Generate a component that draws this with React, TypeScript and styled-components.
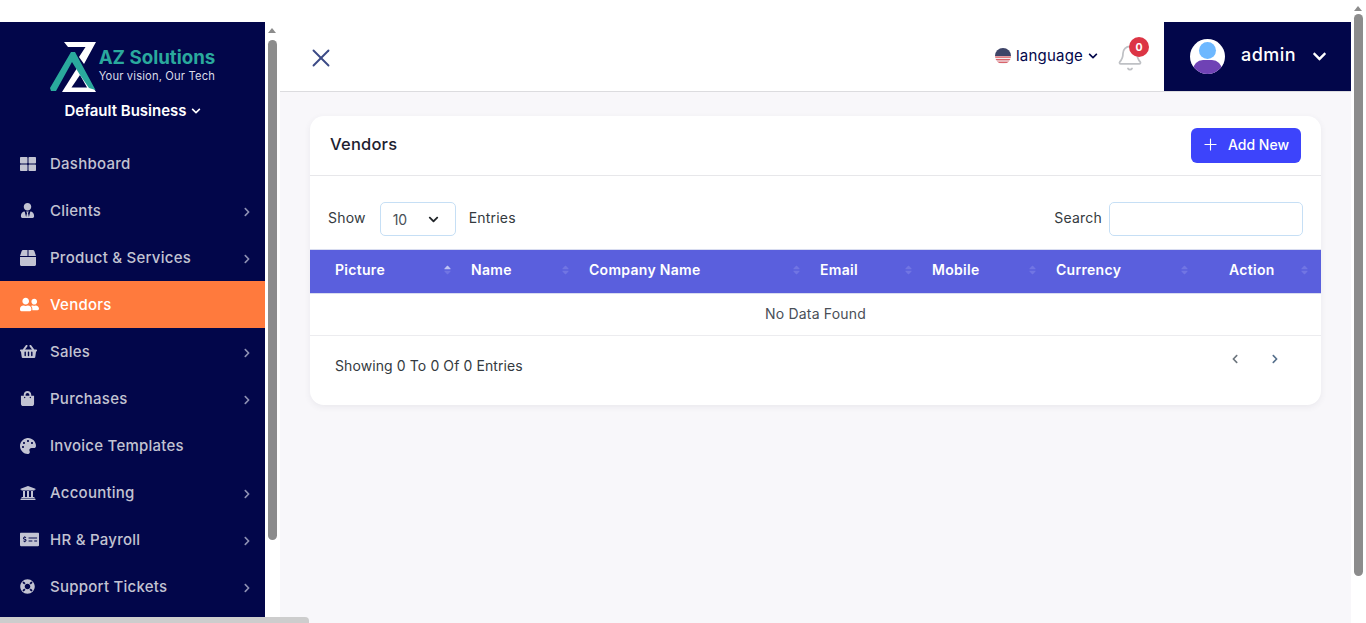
import React from "react";
import styled, { createGlobalStyle } from "styled-components";
import { X, Plus, Bell } from "lucide-react";
import {
  FaThLarge,
  FaUserTie,
  FaBox,
  FaUserFriends,
  FaShoppingBasket,
  FaShoppingBag,
  FaPalette,
  FaUniversity,
  FaMoneyCheckAlt,
  FaLifeRing,
  FaChevronRight,
  FaChevronLeft,
  FaChevronDown,
  FaSortUp,
  FaSortDown,
} from "react-icons/fa";

const NAVY = "#02064a";

const GlobalStyle = createGlobalStyle`
  html, body {
    margin: 0;
    height: 100%;
    overflow: hidden;
    background: #fff;
    font-family: Inter, "Liberation Sans", sans-serif;
  }
  * { box-sizing: border-box; }
`;

const Shell = styled.div`
  display: flex;
  height: 100vh;
  position: relative;
`;

const Page = styled.div`
  flex: 1;
  min-width: 0;
  display: flex;
  padding-top: 22px;
`;

const Sidebar = styled.aside`
  width: 265px;
  flex-shrink: 0;
  background: ${NAVY};
  display: flex;
  flex-direction: column;
`;

const Brand = styled.div`
  height: 118px;
  flex-shrink: 0;
  padding-top: 20px;
  display: flex;
  flex-direction: column;
  align-items: center;
`;

const LogoRow = styled.div`
  display: flex;
  align-items: center;
  height: 50px;
  gap: 3px;
`;

const LogoText = styled.div`
  display: flex;
  flex-direction: column;
  margin-bottom: 3px;
`;

const LogoTitle = styled.span`
  color: #2aa99d;
  font-size: 18.7px;
  line-height: 21px;
  font-weight: 700;
`;

const LogoTag = styled.span`
  color: #d9dbe8;
  font-size: 11.2px;
  line-height: 15px;
  margin-top: 1px;
  letter-spacing: 0.15px;
`;

const BusinessPicker = styled.div`
  display: flex;
  align-items: center;
  gap: 4px;
  margin-top: 8px;
  color: #fff;
  font-size: 15px;
  line-height: 22px;
  font-weight: 600;
`;

const NavList = styled.nav`
  display: flex;
  flex-direction: column;
`;

const NavItem = styled.div<{ $active?: boolean }>`
  height: 47px;
  flex-shrink: 0;
  display: flex;
  align-items: center;
  padding: 0 13px 0 20px;
  background: ${({ $active }) => ($active ? "#ff7a3d" : "transparent")};
  color: ${({ $active }) => ($active ? "#fff" : "#c2c3d2")};
  font-size: 15px;
  font-weight: 500;
  letter-spacing: 0.25px;
`;

const NavIcon = styled.span`
  width: 30px;
  display: flex;
  align-items: center;
  flex-shrink: 0;
`;

const NavArrow = styled.span`
  margin-left: auto;
  display: flex;
  color: #8d90b3;
  padding-top: 3px;
`;

const ScrollRail = styled.div<{ $top: number; $thumbTop: number; $thumbHeight: number }>`
  width: 15px;
  flex-shrink: 0;
  background: #fff;
  padding-top: ${({ $thumbTop }) => $thumbTop}px;
  display: flex;
  justify-content: center;
  position: relative;

  &::before {
    content: "";
    position: absolute;
    top: ${({ $top }) => $top}px;
    left: 3px;
    border-left: 4.5px solid transparent;
    border-right: 4.5px solid transparent;
    border-bottom: 5px solid #8c8c8c;
  }

  &::after {
    content: "";
    display: block;
    width: 9px;
    height: ${({ $thumbHeight }) => $thumbHeight}px;
    border-radius: 5px;
    background: #8c8c8c;
  }
`;

const BottomScroll = styled.div`
  position: absolute;
  left: 0;
  bottom: 0;
  width: 309px;
  height: 6px;
  border-radius: 0 4px 0 0;
  background: #cdcdcd;
`;

const Main = styled.main`
  flex: 1;
  min-width: 0;
  display: flex;
  flex-direction: column;
  background: #f8f7fa;
`;

const TopBar = styled.header`
  height: 70px;
  flex-shrink: 0;
  display: flex;
  align-items: stretch;
  background: #fff;
  border-bottom: 1px solid #dcdcdf;
  padding-left: 26px;
`;

const CloseButton = styled.div`
  display: flex;
  align-items: center;
  color: #3b4a86;
  padding-top: 2px;
  margin-right: auto;
`;

const LanguagePicker = styled.div`
  display: flex;
  align-items: center;
  gap: 5px;
  color: ${NAVY};
  font-size: 15px;
  letter-spacing: 0.2px;
  padding-bottom: 2px;
`;

const BellWrap = styled.div`
  position: relative;
  width: 30px;
  margin: 0 18px 0 18px;
  display: flex;
  align-items: center;
  color: #bfc1c5;
  padding-top: 3px;
`;

const Badge = styled.span`
  position: absolute;
  top: 15px;
  left: 13px;
  width: 20px;
  height: 20px;
  border-radius: 50%;
  background: #dc3545;
  color: #fff;
  font-size: 10.5px;
  font-weight: 700;
  display: flex;
  align-items: center;
  justify-content: center;
`;

const UserBlock = styled.div`
  width: 187px;
  background: ${NAVY};
  display: flex;
  align-items: center;
  padding: 0 0 0 26px;
  color: #fff;
  font-size: 18px;
  font-weight: 500;
  letter-spacing: 0.5px;
`;

const UserName = styled.span`
  margin: -4px 7px 0 16px;
  width: 64px;
`;

const Content = styled.div`
  padding: 24px 30px 0 30px;
`;

const Card = styled.section`
  height: 289px;
  background: #fff;
  border-radius: 14px;
  box-shadow: 0 2px 6px rgba(60, 60, 90, 0.08);
  overflow: hidden;
`;

const CardHead = styled.div`
  height: 60px;
  display: flex;
  align-items: center;
  justify-content: space-between;
  padding: 0 20px;
  border-bottom: 1px solid #e7e7ea;
`;

const CardTitle = styled.h2`
  margin: -3px 0 0;
  font-size: 16.5px;
  line-height: 24px;
  font-weight: 500;
  color: #1d2130;
  letter-spacing: 0.2px;
`;

const AddButton = styled.button`
  width: 110px;
  height: 35px;
  border: 0;
  border-radius: 6px;
  background: #3d44fb;
  color: #fff;
  font: inherit;
  font-size: 14px;
  line-height: 17px;
  font-weight: 500;
  display: flex;
  align-items: center;
  padding: 0 0 2px 10px;
  gap: 8px;
`;

const FilterRow = styled.div`
  height: 73px;
  display: flex;
  align-items: flex-start;
  justify-content: space-between;
  padding: 26px 18px 0;
  font-size: 14px;
  color: #343a40;
`;

const FilterGroup = styled.div`
  display: flex;
  align-items: center;
`;

const FilterLabel = styled.span<{ $gap: number }>`
  margin: 0 ${({ $gap }) => $gap}px 3px;
  letter-spacing: 0.2px;

  &:first-child {
    margin-left: 0;
  }
`;

const PageSize = styled.div`
  width: 76px;
  height: 34px;
  border: 1px solid #c6dff5;
  border-radius: 5px;
  display: flex;
  align-items: center;
  justify-content: space-between;
  padding: 0 16px 0 12px;
  color: #495057;
  font-size: 14px;
`;

const SearchBox = styled.input`
  width: 194px;
  height: 34px;
  border: 1px solid #c6dff5;
  border-radius: 5px;
  background: #fff;
  outline: none;
`;

const Table = styled.table`
  width: 100%;
  table-layout: fixed;
  border-collapse: collapse;
`;

const HeadCell = styled.th<{ $width: number; $lead?: number }>`
  position: relative;
  width: ${({ $width }) => $width}px;
  height: 44px;
  padding: 0 0 4px ${({ $lead }) => $lead ?? 15}px;
  background: #5a5fdd;
  border-top: 1px solid #d8dcf0;
  border-bottom: 1px solid #d8dcf0;
  color: #fff;
  font-size: 14px;
  font-weight: 600;
  text-align: left;
  letter-spacing: 0.3px;
`;

const SortMark = styled.span<{ $asc?: boolean; $right: number }>`
  position: absolute;
  top: 11px;
  right: ${({ $right }) => $right}px;
  width: 7px;
  height: 18px;
  color: #7175e3;

  svg {
    position: absolute;
    left: 0;
    top: 0;
    width: 7px;
    height: 18px;
  }

  svg:first-child {
    color: ${({ $asc }) => ($asc ? "#bfc2f3" : "#7175e3")};
  }
`;

const EmptyCell = styled.td`
  height: 42px;
  padding-bottom: 4px;
  text-align: center;
  font-size: 14px;
  color: #4a4f57;
  border-bottom: 1px solid #ececef;
  letter-spacing: 0.2px;
`;

const TableFoot = styled.div`
  display: flex;
  justify-content: space-between;
  padding: 0 41px 0 25px;
`;

const EntryCount = styled.span`
  margin-top: 20px;
  font-size: 14px;
  line-height: 20px;
  color: #343a40;
  letter-spacing: 0.1px;
`;

const Pager = styled.div`
  display: flex;
  gap: 30px;
  margin-top: 18px;
  height: 12px;
  color: #6c757d;
`;

const PagerNext = styled.span`
  display: flex;
  color: #56708c;
`;

const UserAvatar = () => (
  <svg width="35" height="35" viewBox="0 0 35 35" style={{ flexShrink: 0 }}>
    <defs>
      <clipPath id="avatarClip">
        <circle cx="17.5" cy="17.5" r="17.5" />
      </clipPath>
    </defs>
    <circle cx="17.5" cy="17.5" r="17.5" fill="#fff" />
    <g clipPath="url(#avatarClip)">
      <circle cx="17.5" cy="11.5" r="8.5" fill="#6db8ff" />
      <rect x="3" y="21" width="29" height="20" rx="10" fill="#6f42b5" />
    </g>
  </svg>
);

const UsFlag = () => (
  <svg width="16" height="16" viewBox="0 0 16 16">
    <defs>
      <clipPath id="flagClip">
        <circle cx="8" cy="8" r="8" />
      </clipPath>
    </defs>
    <g clipPath="url(#flagClip)">
      <rect width="16" height="16" fill="#f3eef0" />
      <rect y="8.4" width="16" height="1.4" fill="#d9636b" />
      <rect y="11" width="16" height="1.4" fill="#d9636b" />
      <rect y="13.6" width="16" height="1.4" fill="#d9636b" />
      <rect width="16" height="8" fill="#3d4468" />
    </g>
  </svg>
);

// viewBox uses page coordinates of the logo, easier to compare with the shot
const AzLogo = () => (
  <svg width="46" height="50" viewBox="50 42 46 50">
    <polygon points="64,42 96,42 84,64 79,57 85.5,47 68,47" fill="#fff" />
    <polygon points="62,92 79,65 96,92" fill="#fff" />
    <polygon points="71.5,87.5 80,75 87,87.5" fill="#02064a" />
    <polygon
      points="71,52 75,52 95.5,90 89,88 80,75 72,62 56,91 51,91 50,88"
      fill="#2aa99d"
    />
  </svg>
);

const navItems = [
  { label: "Dashboard", icon: FaThLarge, size: 16 },
  { label: "Clients", icon: FaUserTie, size: 15, sub: true },
  { label: "Product & Services", icon: FaBox, size: 16, sub: true },
  { label: "Vendors", icon: FaUserFriends, size: 19, active: true },
  { label: "Sales", icon: FaShoppingBasket, size: 17, sub: true },
  { label: "Purchases", icon: FaShoppingBag, size: 15, sub: true },
  { label: "Invoice Templates", icon: FaPalette, size: 16 },
  { label: "Accounting", icon: FaUniversity, size: 16, sub: true },
  { label: "HR & Payroll", icon: FaMoneyCheckAlt, size: 19, sub: true },
  { label: "Support Tickets", icon: FaLifeRing, size: 15, sub: true },
];

const columns = [
  { label: "Picture", width: 146, lead: 25, right: 5, asc: true },
  { label: "Name", width: 118, right: 5 },
  { label: "Company Name", width: 231, right: 5 },
  { label: "Email", width: 112, right: 5 },
  { label: "Mobile", width: 124, right: 5 },
  { label: "Currency", width: 152, right: 5 },
  { label: "Action", width: 128, lead: 36, right: 13 },
];

export default function App() {
  return (
    <>
      <GlobalStyle />
      <Shell>
        <Page>
          <Sidebar>
            <Brand>
              <LogoRow>
                <AzLogo />
                <LogoText>
                  <LogoTitle>AZ Solutions</LogoTitle>
                  <LogoTag>Your vision, Our Tech</LogoTag>
                </LogoText>
              </LogoRow>
              <BusinessPicker>
                Default Business <FaChevronDown size={10} />
              </BusinessPicker>
            </Brand>
            <NavList>
              {navItems.map((item) => (
                <NavItem key={item.label} $active={item.active}>
                  <NavIcon>
                    <item.icon size={item.size} />
                  </NavIcon>
                  {item.label}
                  {item.sub && (
                    <NavArrow>
                      <FaChevronRight size={10} />
                    </NavArrow>
                  )}
                </NavItem>
              ))}
            </NavList>
          </Sidebar>
          <ScrollRail $top={6} $thumbTop={18} $thumbHeight={500} />
          <Main>
            <TopBar>
              <CloseButton>
                <X size={30} strokeWidth={1.5} />
              </CloseButton>
              <LanguagePicker>
                <UsFlag />
                language
                <FaChevronDown size={10} />
              </LanguagePicker>
              <BellWrap>
                <Bell size={28} strokeWidth={1.5} />
                <Badge>0</Badge>
              </BellWrap>
              <UserBlock>
                <UserAvatar />
                <UserName>admin</UserName>
                <FaChevronDown size={15} />
              </UserBlock>
            </TopBar>
            <Content>
              <Card>
                <CardHead>
                  <CardTitle>Vendors</CardTitle>
                  <AddButton>
                    <Plus size={19} strokeWidth={1.4} />
                    Add New
                  </AddButton>
                </CardHead>
                <FilterRow>
                  <FilterGroup>
                    <FilterLabel $gap={14}>Show</FilterLabel>
                    <PageSize>
                      10
                      <FaChevronDown size={11} color="#212529" />
                    </PageSize>
                    <FilterLabel $gap={13}>Entries</FilterLabel>
                  </FilterGroup>
                  <FilterGroup>
                    <FilterLabel $gap={7}>Search</FilterLabel>
                    <SearchBox aria-label="Search" />
                  </FilterGroup>
                </FilterRow>
                <Table>
                  <thead>
                    <tr>
                      {columns.map((col) => (
                        <HeadCell key={col.label} $width={col.width} $lead={col.lead}>
                          {col.label}
                          <SortMark $asc={col.asc} $right={col.right}>
                            <FaSortUp />
                            <FaSortDown />
                          </SortMark>
                        </HeadCell>
                      ))}
                    </tr>
                  </thead>
                  <tbody>
                    <tr>
                      <EmptyCell colSpan={7}>No Data Found</EmptyCell>
                    </tr>
                  </tbody>
                </Table>
                <TableFoot>
                  <EntryCount>Showing 0 To 0 Of 0 Entries</EntryCount>
                  <Pager>
                    <FaChevronLeft size={10} />
                    <PagerNext>
                      <FaChevronRight size={10} />
                    </PagerNext>
                  </Pager>
                </TableFoot>
              </Card>
            </Content>
          </Main>
        </Page>
        <ScrollRail $top={6} $thumbTop={14} $thumbHeight={562} />
        <BottomScroll />
      </Shell>
    </>
  );
}
